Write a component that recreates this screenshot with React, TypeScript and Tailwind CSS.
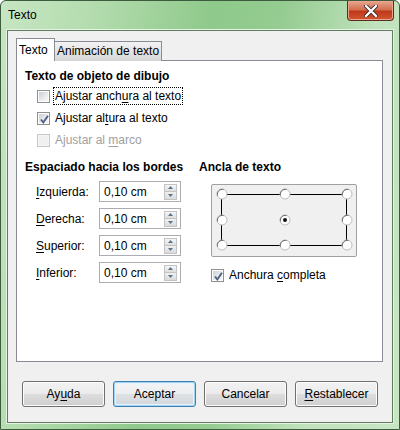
import * as React from "react";

// Windows 7 style checkbox
function CheckBox({ checked, disabled }: { checked?: boolean; disabled?: boolean }) {
  return (
    <span
      className={
        "relative flex h-[13px] w-[13px] shrink-0 items-center justify-center border " +
        (disabled ? "border-[#c8c8c8] bg-[#f4f4f4]" : "border-[#8e8f8f] bg-white")
      }
    >
      <span
        className={
          "h-[9px] w-[9px] " +
          (disabled
            ? "bg-[#f0f0f0]"
            : "bg-[linear-gradient(135deg,#cbcfd5_0%,#e9ebee_60%,#f6f6f6_100%)]")
        }
      />
      {checked && (
        <svg className="absolute left-[1px] top-[1px]" width="11" height="11" viewBox="0 0 11 11">
          <path d="M2 5.5 L4.3 8.5 L9 1.8" fill="none" stroke="#4d6185" strokeWidth="1.9" />
        </svg>
      )}
    </span>
  );
}

function SpinField({ label, mnemonic }: { label: string; mnemonic: string }) {
  const rest = label.slice(1);
  return (
    <div className="flex h-[21px] items-center">
      <span className="ml-[11px] w-[63px] text-black">
        <u className="underline-offset-2">{mnemonic}</u>
        {rest}
      </span>
      <div className="flex h-[21px] w-[82px] items-center justify-between border border-[#abadb3] bg-white pl-[4px] pr-[3px]">
        <span className="text-black">0,10 cm</span>
        <div className="flex h-[16px] w-[13px] flex-col">
          <span className="flex h-[8px] items-center justify-center border border-[#c3c3c3] bg-[linear-gradient(#f6f6f6,#dedede)]">
            <svg width="5" height="3" viewBox="0 0 5 3">
              <path d="M0 3 L2.5 0 L5 3 Z" fill="#5a7290" />
            </svg>
          </span>
          <span className="flex h-[8px] items-center justify-center border border-t-0 border-[#c3c3c3] bg-[linear-gradient(#f0f0f0,#dadada)]">
            <svg width="5" height="3" viewBox="0 0 5 3">
              <path d="M0 0 L2.5 3 L5 0 Z" fill="#5a7290" />
            </svg>
          </span>
        </div>
      </div>
    </div>
  );
}

function Radio({ cx, cy, selected }: { cx: number; cy: number; selected?: boolean }) {
  return (
    <g>
      <circle cx={cx} cy={cy} r="5" fill="white" stroke="#bdbdbd" strokeWidth="1" />
      <path
        d={`M ${cx - 4.5} ${cy + 1.5} A 5 5 0 0 1 ${cx + 1.5} ${cy - 4.5}`}
        fill="none"
        stroke="#6b6b6b"
        strokeWidth="1"
      />
      {selected && <circle cx={cx} cy={cy} r="2" fill="#111" />}
    </g>
  );
}

function Button({ children, primary }: { children: React.ReactNode; primary?: boolean }) {
  return (
    <button
      type="button"
      className={
        "flex h-[26px] w-[83px] items-center justify-center rounded-[3px] border text-black " +
        (primary
          ? "border-[#3c7fb1] bg-[linear-gradient(#f2f4f6_0%,#eceef0_50%,#dfe2e5_51%,#d2d6da_100%)] shadow-[inset_0_0_0_1px_#9fd4f5,inset_0_0_0_2px_#e4f3fc]"
          : "border-[#707070] bg-[linear-gradient(#f2f2f2_0%,#ebebeb_50%,#dddddd_51%,#cfcfcf_100%)] shadow-[inset_0_0_0_1px_#fcfcfc]")
      }
    >
      {children}
    </button>
  );
}

export default function App() {
  return (
    <div className="flex h-[430px] w-[400px] flex-col overflow-hidden rounded-t-[6px] border border-[#3d5b3d] bg-[linear-gradient(100deg,#c7e6c3_0%,#b3dcae_20%,#8fc98b_45%,#95cc91_60%,#c0e2bc_80%,#c8e6c4_100%)] text-[12px] leading-[16px] [font-family:'Liberation_Sans',Arial,sans-serif]">
      {/* Title bar */}
      <div className="flex h-[29px] shrink-0 items-start justify-between pl-[7px] pr-[5px]">
        <span className="mt-[6px] text-black">Texto</span>
        <div className="flex h-[20px] w-[47px] items-center justify-center rounded-b-[4px] border border-t-0 border-[#5b2b22] bg-[linear-gradient(#e5a890_0%,#d46f52_45%,#c0391b_55%,#d0582f_100%)] shadow-[inset_0_0_0_1px_#eba58f]">
          <svg width="14" height="12" viewBox="0 0 14 12">
            <path d="M2 1 L12 11 M12 1 L2 11" stroke="#3a2a2a" strokeWidth="4" strokeLinecap="round" />
            <path d="M2 1 L12 11 M12 1 L2 11" stroke="white" strokeWidth="2.4" strokeLinecap="round" />
          </svg>
        </div>
      </div>

      {/* Client area */}
      <div className="mx-[6px] mb-[6px] flex flex-1 flex-col border border-[#5f7d5f] bg-[#f0f0f0] pl-[8px] pr-[9px] pt-[7px] shadow-[0_0_0_1px_#e6f3e4]">
        {/* Tabs */}
        <div className="relative z-10 flex h-[23px] items-end">
          <div className="flex h-[23px] w-[39px] items-start border border-b-0 border-[#898c95] bg-white pl-[2px] pt-[3px] text-black">
            Texto
          </div>
          <div className="flex h-[20px] w-[107px] items-start border border-b-0 border-l-0 border-[#898c95] bg-[linear-gradient(#f2f2f2,#d6d6d6)] pl-[2px] pt-[1px] text-black">
            Animación de texto
          </div>
        </div>

        {/* Tab panel */}
        <div className="-mt-px flex h-[302px] flex-col border border-[#898c95] bg-white pl-[8px] pt-[7px]">
          <div className="h-[17px] font-bold text-black">Texto de objeto de dibujo</div>
          <div className="flex flex-col pl-[12px]">
            <div className="flex h-[22px] items-center gap-[4px]">
              <CheckBox />
              <span className="px-px text-black outline outline-1 outline-dotted outline-black">
                Ajustar anch
                <u className="underline-offset-2">u</u>
                ra al texto
              </span>
            </div>
            <div className="flex h-[22px] items-center gap-[4px]">
              <CheckBox checked />
              <span className="px-px text-black">
                Ajustar al
                <u className="underline-offset-2">t</u>
                ura al texto
              </span>
            </div>
            <div className="flex h-[22px] items-center gap-[4px]">
              <CheckBox disabled />
              <span className="px-px text-[#a0a0a0]">
                Ajustar al <u className="underline-offset-2">m</u>arco
              </span>
            </div>
          </div>

          <div className="mt-[8px] flex">
            {/* Left column */}
            <div className="flex w-[174px] flex-col">
              <div className="h-[16px] font-bold text-black">Espaciado hacia los bordes</div>
              <div className="mt-[6px] flex flex-col gap-[6px]">
                <SpinField label="Izquierda:" mnemonic="I" />
                <SpinField label="Derecha:" mnemonic="D" />
                <SpinField label="Superior:" mnemonic="S" />
                <SpinField label="Inferior:" mnemonic="I" />
              </div>
            </div>

            {/* Right column */}
            <div className="flex flex-col">
              <div className="h-[16px] font-bold text-black">Ancla de texto</div>
              <div className="ml-[12px] mt-[9px] h-[73px] w-[146px] rounded-[2px] border border-[#a0a0a0] bg-[#f0f0f0]">
                <svg width="144" height="71" viewBox="0 0 144 71">
                  <rect x="9.5" y="9.5" width="125" height="51" fill="none" stroke="#000" strokeWidth="1" />
                  <Radio cx={10} cy={9} />
                  <Radio cx={73} cy={9} />
                  <Radio cx={135} cy={9} />
                  <Radio cx={10} cy={35} />
                  <Radio cx={73} cy={35} selected />
                  <Radio cx={135} cy={35} />
                  <Radio cx={10} cy={60} />
                  <Radio cx={73} cy={60} />
                  <Radio cx={135} cy={60} />
                </svg>
              </div>
              <div className="ml-[12px] mt-[9px] flex h-[18px] items-center gap-[5px]">
                <CheckBox checked />
                <span className="text-black">
                  Anchura <u className="underline-offset-2">c</u>ompleta
                </span>
              </div>
            </div>
          </div>
        </div>

        {/* Buttons */}
        <div className="mt-[19px] flex gap-[8px] pl-[6px]">
          <Button>
            Ay<u className="underline-offset-2">u</u>da
          </Button>
          <Button primary>Aceptar</Button>
          <Button>Cancelar</Button>
          <Button>
            <u className="underline-offset-2">R</u>establecer
          </Button>
        </div>
      </div>
    </div>
  );
}
